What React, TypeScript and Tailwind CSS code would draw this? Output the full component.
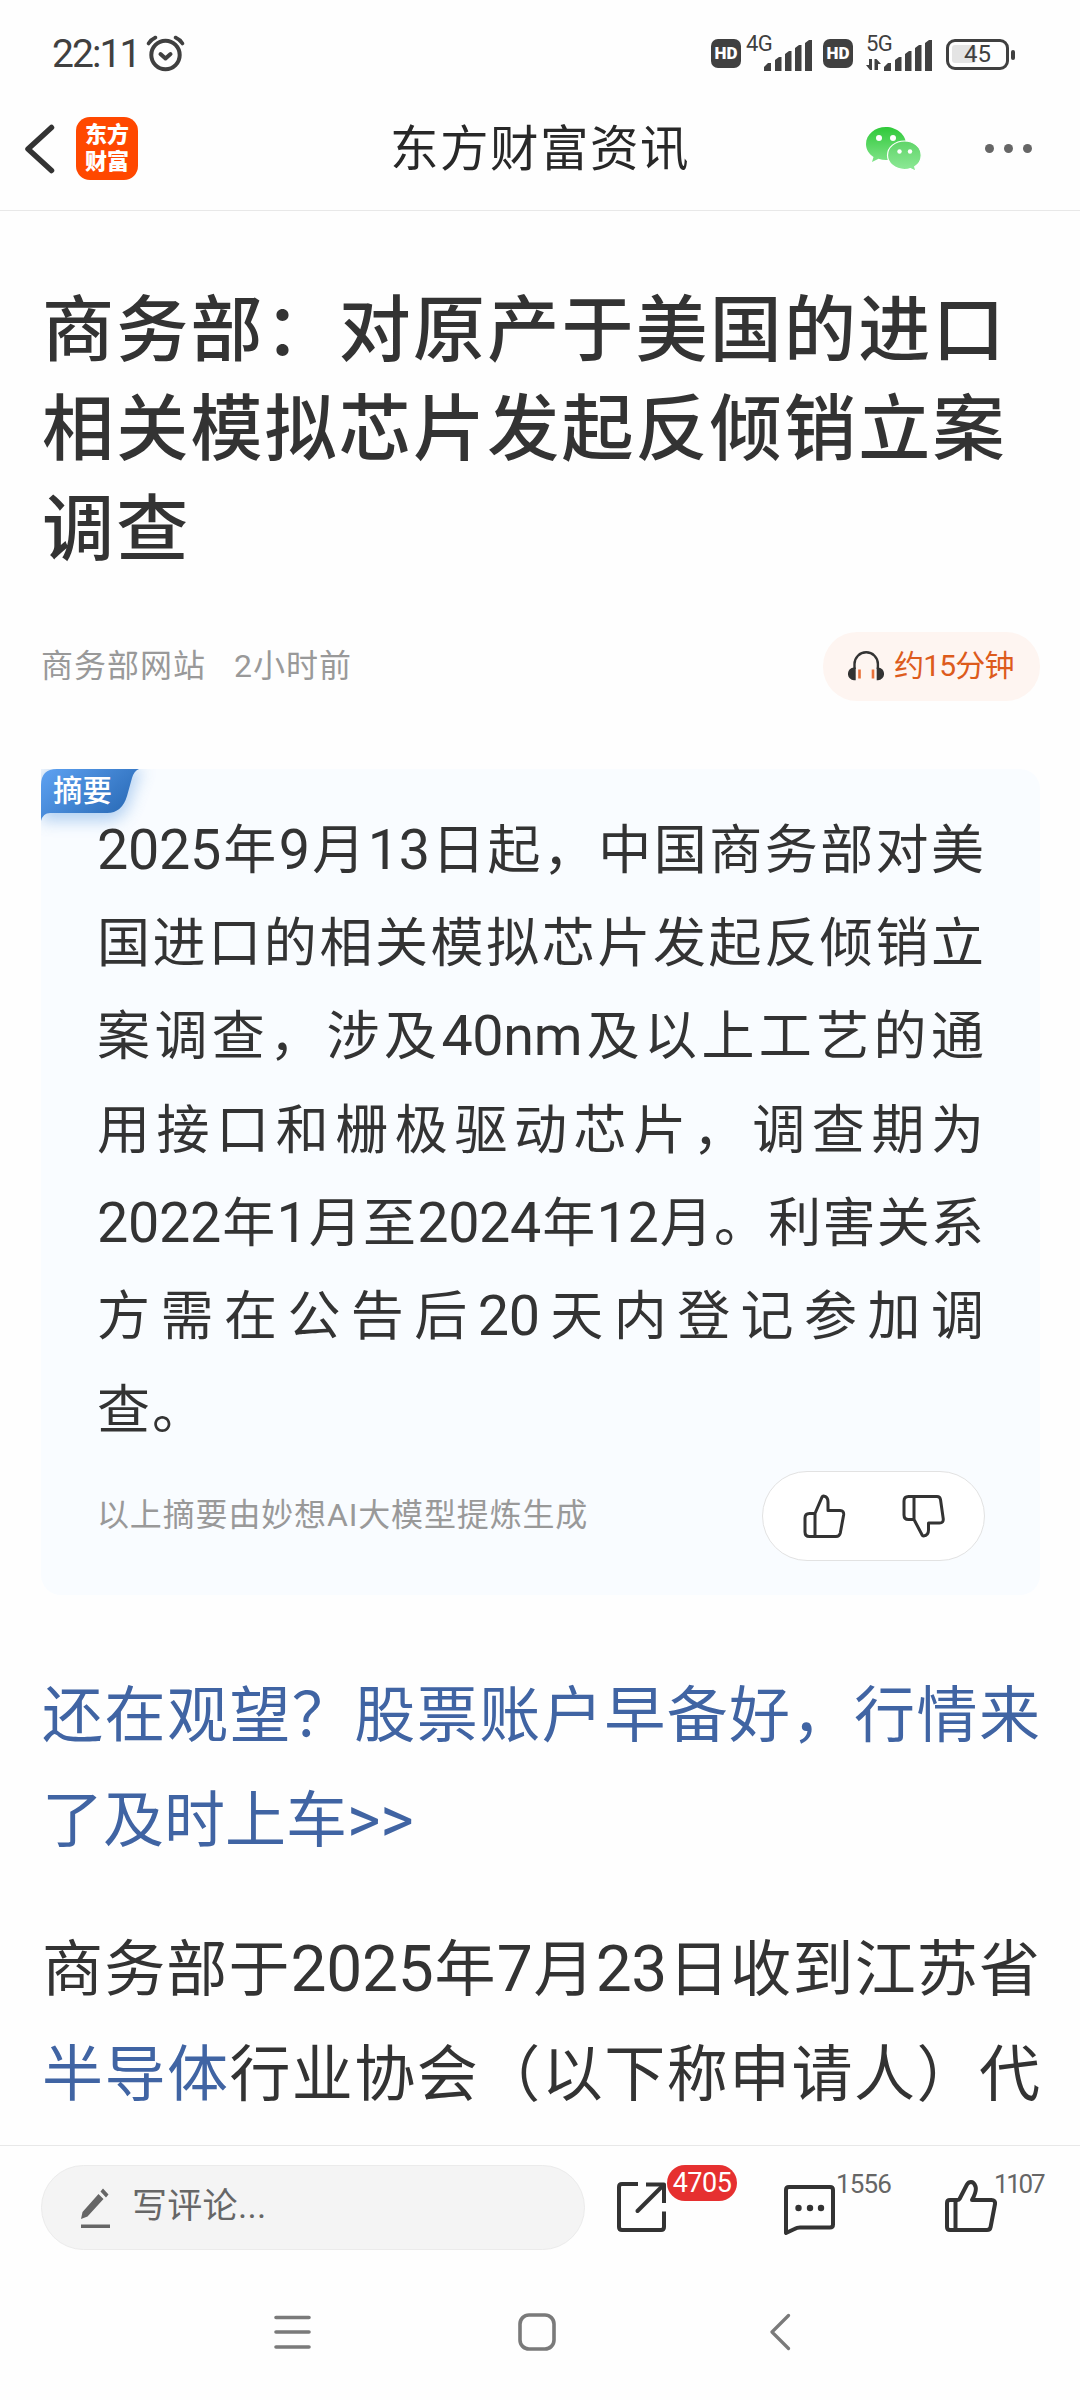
const summary = [
    "2025年9月13日起，中国商务部对美",
    "国进口的相关模拟芯片发起反倾销立",
    "案调查，涉及40nm及以上工艺的通",
    "用接口和栅极驱动芯片，调查期为",
    "2022年1月至2024年12月。利害关系",
    "方需在公告后20天内登记参加调",
    "查。",
];

function Signal({ label, data }: { label: string; data?: boolean }) {
    return (
        <div className="relative w-[66px] h-[36px]">
            <span className="absolute left-0 top-0 text-[22px] leading-[17px] tracking-[-0.5px]">
                {label}
            </span>
            <svg className="absolute inset-0" width="66" height="36" viewBox="0 0 66 36" fill="currentColor">
                <path d="M18 36v-4l4-4h3v8zM29 36v-11l4-3h2.500v14zM39 36v-17l4-3h2.500v20zM49 36v-23l4-3h2.500v26zM59 36v-28l4-3h3v31z" />
                {data && <path d="M6 24v11H4l-4-5h3v-6zM8.500 35V24h2l4.500 5h-3v6z" />}
            </svg>
        </div>
    );
}

function Hd() {
    return (
        <span className="w-[30px] h-[29px] rounded-[7px] bg-[#404040] text-white text-[17px] font-black leading-[29px] text-center">
            HD
        </span>
    );
}

function StatusBar() {
    return (
        <div className="flex items-start justify-between h-[86px] pt-[35px] pl-[52px] pr-[65px] text-[#404040]">
            <div className="flex items-start">
                <span className="w-[94px] text-[39px] leading-[38px] tracking-[-1.900px]">22:11</span>
                <svg width="40" height="38" viewBox="0 0 40 38" fill="none" stroke="currentColor" strokeWidth="4" strokeLinecap="round" strokeLinejoin="round">
                    <circle cx="19.500" cy="20" r="14.200" />
                    <path d="M14.500 19l5 4.500 5-4.500" />
                    <path d="M2.500 8.500q2.500-4 7-6M29.500 2.500q4.500 2 7 6" strokeWidth="3.600" />
                </svg>
            </div>
            <div className="flex items-start">
                <div className="pt-1 flex">
                    <Hd />
                </div>
                <div className="ml-[5px]">
                    <Signal label="4G" />
                </div>
                <div className="pt-1 flex ml-[11px]">
                    <Hd />
                </div>
                <div className="ml-[13px]">
                    <Signal label="5G" data />
                </div>
                <div className="flex items-center mt-1 ml-[14px]">
                    <div className="relative w-[63px] h-[31px] rounded-[9px] border-[3.500px] border-[#404040] p-[3px]">
                        <div className="w-[24px] h-[18px] rounded-[3px] bg-[#e4e4e4]" />
                        <span className="absolute inset-0 text-center text-[24px] leading-[25px]">45</span>
                    </div>
                    <div className="ml-[2px] w-1 h-[10px] rounded-sm bg-[#404040]" />
                </div>
            </div>
        </div>
    );
}

function WeChat() {
    return (
        <svg width="56" height="46" viewBox="0 0 56 46">
            <defs>
                <linearGradient id="wx1" x1="0" y1="0" x2="0" y2="1">
                    <stop offset="0" stopColor="#2fc939" />
                    <stop offset="1" stopColor="#7fe388" />
                </linearGradient>
                <linearGradient id="wx2" x1="0" y1="0" x2="0" y2="1">
                    <stop offset="0" stopColor="#5fd468" />
                    <stop offset="1" stopColor="#8fea98" />
                </linearGradient>
            </defs>
            <path d="M20 1C9 1 0 8.500 0 18c0 5.500 3 10 7.500 13L6 36l6.500-3.200c2.500.8 5 1.200 7.500 1.200 11 0 20-7 20-16S31 1 20 1z" fill="url(#wx1)" />
            <path d="M38.500 15c-9.500 0-17 6.300-17 14.200s7.500 14.300 17 14.300c2.200 0 4.200-.3 6-.9l5.500 2.800-1.300-4.600c4-2.600 6.500-6.800 6.500-11.600C55.200 21.300 48 15 38.500 15z" fill="url(#wx2)" stroke="#fff" strokeWidth="1.200" />
            <circle cx="13" cy="12" r="3" fill="#fff" />
            <circle cx="27" cy="12" r="3" fill="#fff" />
            <circle cx="33.500" cy="25.500" r="2.200" fill="#fff" />
            <circle cx="44" cy="25.500" r="2.200" fill="#fff" />
        </svg>
    );
}

function Header() {
    return (
        <header className="grid grid-cols-3 items-center h-[125px] pt-px border-b border-[#e8e8e8]">
            <div className="flex items-center pl-[24px]">
                <svg width="31" height="50" viewBox="0 0 31 50" fill="none" stroke="#333" strokeWidth="5.500" strokeLinecap="round" strokeLinejoin="round">
                    <path d="M27.500 3.500L4 25l23.500 21.500" />
                </svg>
                <div className="ml-[21px] w-[62px] h-[63px] rounded-[14px] bg-[#ff4800] text-white text-[22px] font-black leading-[27px] text-center pt-[4px]">
                    东方
                    <br />
                    财富
                </div>
            </div>
            <h1 className="pt-[2px] text-center text-[48.500px] tracking-[1.500px] leading-[60px] text-[#282828] whitespace-nowrap">
                东方财富资讯
            </h1>
            <div className="flex items-center justify-end pr-[48px]">
                <WeChat />
                <div className="flex gap-[10px] ml-[63px]">
                    <i className="size-[9px] rounded-full bg-[#666]" />
                    <i className="size-[9px] rounded-full bg-[#666]" />
                    <i className="size-[9px] rounded-full bg-[#666]" />
                </div>
            </div>
        </header>
    );
}

function Headphones() {
    return (
        <svg width="36" height="30" viewBox="0 0 36 30">
            <path d="M6.500 18V13a11.700 11.700 0 0 1 23.400 0v5" fill="none" stroke="#333" strokeWidth="2.400" />
            <path d="M7.700 16.500v12.700H6a6 6.300 0 0 1 0-12.700zM28.700 16.500v12.700H30a6 6.300 0 0 0 0-12.700z" fill="#333" />
            <path d="M11.500 18.500v9M25 18.500v9" stroke="#e8713a" strokeWidth="2.600" />
        </svg>
    );
}

function SummaryTag() {
    return (
        <div className="absolute left-0 top-0">
            <svg width="160" height="90" viewBox="0 0 160 90">
                <defs>
                    <linearGradient id="tag" x1="0" y1="0" x2="1" y2="0.6">
                        <stop offset="0" stopColor="#5ea2f2" />
                        <stop offset="1" stopColor="#2b6cb8" />
                    </linearGradient>
                    <filter id="glow" x="-20%" y="-20%" width="160%" height="220%">
                        <feGaussianBlur stdDeviation="8" />
                    </filter>
                </defs>
                <path d="M0 0h102l-10 20q-5 32-26 32H0z" fill="#4a8fdd" opacity="0.4" filter="url(#glow)" />
                <path d="M0 16Q0 0 16 0h82q-5 2-7 9l-5 18q-5 17-20 17H9q-7 0-9 8z" fill="url(#tag)" />
            </svg>
            <span className="absolute left-[12px] top-[3px] text-[29.500px] font-medium leading-[38px] text-white whitespace-nowrap">
                摘要
            </span>
        </div>
    );
}

function ThumbUp() {
    return (
        <svg width="43" height="44" viewBox="0 0 43 44" fill="none" stroke="#333" strokeWidth="3" strokeLinejoin="round">
            <path d="M12 19.500H6.500Q2 19.500 2 24v14q0 4.500 4.500 4.500H33q3.500 0 4.300-3.500l3.300-18q.6-4.500-3.600-4.500H25V8q0-5.500-4.500-6-1 0-1.500 1.200zM12 19.500v23" />
        </svg>
    );
}

function ThumbDown() {
    return (
        <svg width="43" height="44" viewBox="0 0 43 44" fill="none" stroke="#333" strokeWidth="3" strokeLinejoin="round">
            <path d="M12 25.500H6.500Q2 25.500 2 21V7q0-4.500 4.500-4.500H35q3 0 3.500 3l2.700 19q.6 4.500-3.700 4.500H26.500v7q0 5.500-5 6-1 0-1.500-1.200zM12 25.500v-23" />
        </svg>
    );
}

// latin runs are set a bit larger than the hanzi around them
function Mixed({ text }: { text: string }) {
    return text.split(/([0-9a-zA-Z>]+)/).map((part, i) =>
        i % 2 ? (
            <span key={i} className="text-[1.05em] leading-none tracking-[-0.300px]">
                {part}
            </span>
        ) : (
            part
        )
    );
}

function Line({ text, link }: { text: string; link?: string }) {
    return (
        <span className="block whitespace-nowrap [text-align-last:justify]">
            {link && <span className="text-[#4064a3]">{link}</span>}
            <Mixed text={text} />
        </span>
    );
}

function Article() {
    return (
        <main className="h-[1934px] overflow-hidden pl-[41px] pr-10 text-[#333]">
            <h2 className="pt-[70px] pl-px text-[72px] tracking-[2.200px] leading-[99.300px] font-medium whitespace-nowrap">
                商务部：对原产于美国的进口
                <br />
                相关模拟芯片发起反倾销立案
                <br />
                调查
            </h2>
            <div className="flex items-center justify-between mt-[53px]">
                <div className="flex gap-[28px] -mt-px text-[32px] tracking-[1px] text-[#999]">
                    <span>商务部网站</span>
                    <span>2小时前</span>
                </div>
                <div className="flex items-center w-[217px] h-[69px] pl-[25px] rounded-[34px] bg-[#fef5f1]">
                    <Headphones />
                    <span className="ml-[10px] -mt-px text-[30px] tracking-[-0.800px] text-[#dd5b1c] whitespace-nowrap">
                        约15分钟
                    </span>
                </div>
            </div>

            <section className="relative mt-[68px] h-[826px] rounded-[20px] bg-[#f9fcff] pt-[36px] px-[56px]">
                <SummaryTag />
                <div className="relative text-[53px] leading-[93.300px]">
                    {summary.map((line, i) =>
                        i < summary.length - 1 ? (
                            <Line key={line} text={line} />
                        ) : (
                            <span key={line} className="block tracking-[2px]">
                                {line}
                            </span>
                        )
                    )}
                </div>
                <div className="flex items-center justify-between mt-[13px] -mr-px">
                    <span className="-mt-px text-[32px] tracking-[0.850px] text-[#999]">以上摘要由妙想AI大模型提炼生成</span>
                    <div className="flex items-center justify-center gap-[56px] w-[223px] h-[90px] rounded-full border border-[#e2e2e2] bg-white">
                        <ThumbUp />
                        <ThumbDown />
                    </div>
                </div>
            </section>

            <p className="mt-[69px] pl-px text-[61px] leading-[105px] text-[#4064a3]">
                <Line text="还在观望？股票账户早备好，行情来" />
                <span className="block">
                    <Mixed text="了及时上车>>" />
                </span>
            </p>
            <p className="mt-[44px] pl-px text-[61px] leading-[105px]">
                <Line text="商务部于2025年7月23日收到江苏省" />
                <Line link="半导体" text="行业协会（以下称申请人）代" />
            </p>
        </main>
    );
}

function CommentBar() {
    return (
        <div className="flex items-start h-[123px] border-t border-[#e8e8e8] pt-[19px] pl-[41px]">
            <div className="flex items-center w-[544px] h-[85px] rounded-full border border-[#ebebeb] bg-[#f4f4f4] pl-[39px] text-[#666]">
                <svg width="30" height="42" viewBox="0 0 30 42" fill="currentColor">
                    <path d="M0 32l1.500-7L17.500 7l5 5L6.500 29.500zM19.500 4.500L22 1.500l5.500 6L25 10.500zM0 37.500h29v3.500H0z" />
                </svg>
                <span className="ml-[21px] -mt-px text-[35px] tracking-[0.300px]">写评论...</span>
            </div>
            <div className="relative ml-[32px] mt-[17px]">
                <svg width="49" height="50" viewBox="0 0 49 50" fill="none" stroke="#333" strokeWidth="4" strokeLinejoin="round">
                    <path d="M21 2H5Q2 2 2 5v40q0 3 3 3h39q3 0 3-3V29.500M29 2.500h18V21" />
                    <path d="M20.500 29L45 4.500" strokeLinecap="round" />
                </svg>
                <span className="absolute left-[50px] -top-[17px] w-[70px] h-[36px] rounded-full bg-[#e63030] text-white text-[27px] leading-[36px] tracking-[-0.500px] text-center">
                    4705
                </span>
            </div>
            <div className="relative ml-[118px] mt-[20px]">
                <svg width="51" height="50" viewBox="0 0 51 50" fill="none" stroke="#333" strokeWidth="4" strokeLinejoin="round">
                    <path d="M2 5q0-3 3-3h41q3 0 3 3v34.500q0 3-3 3H16q-3 0-5.500 1.500L2 48z" />
                    <g fill="#333" stroke="none">
                        <circle cx="14.500" cy="23" r="3.200" />
                        <circle cx="26" cy="23" r="3.200" />
                        <circle cx="37" cy="23" r="3.200" />
                    </g>
                </svg>
                <span className="absolute left-[52px] -top-[17px] text-[26px] leading-[32px] tracking-[-0.900px] text-[#666]">1556</span>
            </div>
            <div className="relative ml-[110px] mt-[14px]">
                <svg width="52" height="53" viewBox="0 0 52 53" fill="none" stroke="#333" strokeWidth="4" strokeLinejoin="round">
                    <path d="M10 21H5q-3 0-3 3v24q0 3 3 3h37q3 0 3.600-3L50 25q.5-4-3.500-4H27q5-9 3.500-13.500Q29 3 26 3q-2.500 0-4 2.500L14.500 20q-.6 1-2 1zM10.500 21v30" />
                </svg>
                <span className="absolute left-[49px] -top-[11px] text-[26px] leading-[32px] tracking-[-2.300px] text-[#666]">1107</span>
            </div>
        </div>
    );
}

function NavBar() {
    return (
        <nav className="flex items-center h-[132px] pb-[4px] pl-[274px] text-[#7a7a7a]">
            <svg width="37" height="40" viewBox="0 0 37 40" fill="none" stroke="currentColor" strokeWidth="3.600" strokeLinecap="round">
                <path d="M2 5.500h33M2 20h33M2 35h33" />
            </svg>
            <svg className="ml-[207px]" width="38" height="40" viewBox="0 0 38 40" fill="none" stroke="currentColor" strokeWidth="3.600">
                <rect x="2" y="3" width="34" height="34" rx="9" />
            </svg>
            <svg className="ml-[214px]" width="22" height="40" viewBox="0 0 22 40" fill="none" stroke="currentColor" strokeWidth="3.200" strokeLinecap="round" strokeLinejoin="round">
                <path d="M18.500 3.500L2 20l16.500 16.500" />
            </svg>
        </nav>
    );
}

export default function App() {
    return (
        <div
            lang="zh-CN"
            className="w-[1080px] h-[2400px] overflow-hidden bg-[#fefefe] font-[Roboto,'Noto_Sans_CJK_SC',sans-serif] [text-spacing-trim:space-all]"
        >
            <StatusBar />
            <Header />
            <Article />
            <CommentBar />
            <NavBar />
        </div>
    );
}
